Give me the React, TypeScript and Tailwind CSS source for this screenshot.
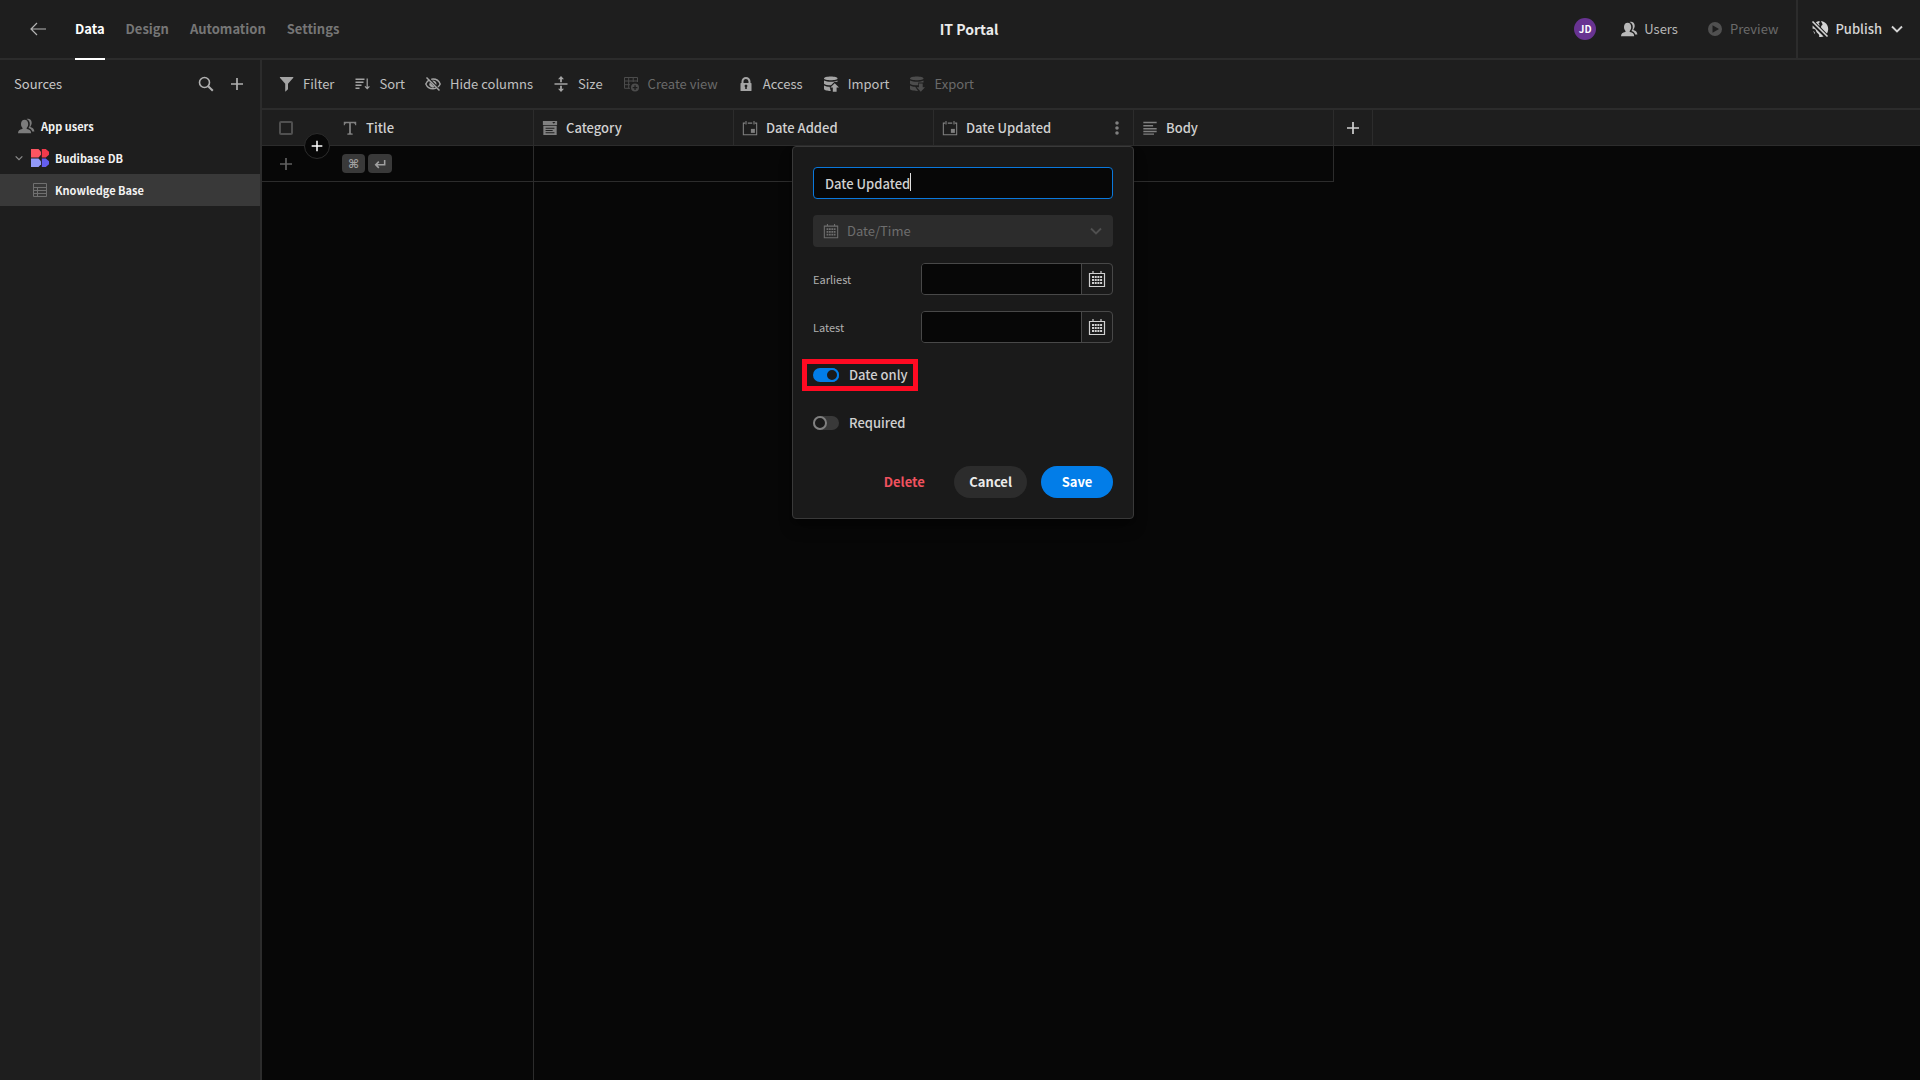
import type { ReactNode } from 'react';

interface IconProps {
  className?: string;
}

interface Column {
  name: string;
  icon: ReactNode;
  active?: boolean;
}

interface Action {
  label: string;
  icon: ReactNode;
  disabled?: boolean;
}

function Svg({ className = 'size-[18px]', children }: IconProps & { children: ReactNode }) {
  return (
    <svg viewBox="0 0 18 18" fill="currentColor" className={`shrink-0 ${className}`} aria-hidden="true">
      {children}
    </svg>
  );
}

const BackIcon = () => (
  <Svg>
    <path d="M17 9H2M8 3 2 9l6 6" fill="none" stroke="currentColor" strokeWidth="1.2" />
  </Svg>
);

const SearchIcon = () => (
  <Svg>
    <circle cx="7.5" cy="7.5" r="5" fill="none" stroke="currentColor" strokeWidth="1.6" />
    <path d="m11.2 11.2 4.6 4.6" stroke="currentColor" strokeWidth="2" />
  </Svg>
);

const PlusIcon = ({ className }: IconProps) => (
  <Svg className={className}>
    <path d="M3 9h12M9 3v12" stroke="currentColor" strokeWidth="1.7" />
  </Svg>
);

const UsersIcon = ({ className }: IconProps) => (
  <Svg className={className}>
    <path d="M1 16.2c0-2.6 1.7-3.4 4.2-4.1.4-.1.5-.5.3-1-1-1.2-1.5-2.4-1.5-4C4 4.3 5.500 2.800 7.600 2.800s3.600 1.500 3.600 4.300c0 1.600-.5 2.800-1.500 4-.2.500-.1.900.3 1 2.500.700 4.200 1.500 4.200 4.100z" />
    <path d="M9.500 2.100c2.500-.9 5.200.5 5.200 3.700 0 1.400-.4 2.400-1.200 3.400-.2.400-.1.800.3 1 2 .7 3.200 1.500 3.600 4.300h-2.200c-.5-1.700-1.700-2.700-3.800-3.400.9-1.200 1.400-2.500 1.400-4.100 0-2.200-1.100-4.100-3.300-4.900z" />
  </Svg>
);

const PreviewIcon = () => (
  <Svg>
    <path fillRule="evenodd" d="M9 2a7 7 0 1 0 0 14A7 7 0 0 0 9 2zM6.500 5.200v7.600L13 9z" />
  </Svg>
);

const PublishIcon = () => (
  <Svg>
    <path d="M1.600 5.600 12.600 16.600A8 8 0 0 1 8 16.800c.6-1.200.2-2.300-.8-3.100-1.300-1-2-2-2.400-3.500C4.300 9 2.700 8.500 1.600 8.800z" />
    <path d="M2.200 11c1.300.6 1.800 1.700 1.900 3.300A8 8 0 0 1 2.200 11z" />
    <path d="M4.800 2.300A8 8 0 0 1 8.300 1c.7.800.3 1.800-.6 2.300-.2.800.1 1.200.8 1.300L8.300 6zM10 1.100a8 8 0 0 1 5.900 12.300L10.300 7.800c-.5-1.200-.2-2.200.8-2.600C12.300 4.700 10.600 3 10 1.100z" />
    <path d="m1.500 1.500 15 15" stroke="currentColor" strokeWidth="1.600" />
  </Svg>
);

const ChevronIcon = ({ className }: IconProps) => (
  <Svg className={className}>
    <path d="m4 6.500 5 5 5-5" fill="none" stroke="currentColor" strokeWidth="1.900" />
  </Svg>
);

const FilterIcon = () => (
  <Svg>
    <path d="M2.900 2h13.400v.8L11 8.800v5.400l-2.800 2.500V8.800L2.900 2.800z" />
  </Svg>
);

const SortIcon = () => (
  <Svg>
    <path d="M2.500 3.500h9v1.600h-9zM2.500 6.500h8v1.600h-8zM2.500 9.500h6v1.600h-6zM2.500 12.500h4v1.600h-4z" />
    <path d="M14.200 3.500v10M12 11.400l2.200 2.300 2.200-2.300" fill="none" stroke="currentColor" strokeWidth="1.200" />
  </Svg>
);

const HideIcon = () => (
  <Svg>
    <path
      d="M5.300 4.900C3.500 6 2.200 7.800 1.800 9c1 2.300 3.800 4.800 7.200 4.800 1.100 0 2.200-.3 3.100-.700M7.200 4.300C7.800 4.100 8.400 4 9 4c3.400 0 6.200 2.500 7.200 5-.400 1-1.200 2.100-2.300 3"
      fill="none"
      stroke="currentColor"
      strokeWidth="1.400"
    />
    <path d="M5.800 7.200a3.600 3.600 0 0 0 4.900 4.900zM8 5.600a3.600 3.600 0 0 1 4.400 4.400z" />
    <path d="m2.500 2.500 13 13" stroke="currentColor" strokeWidth="1.500" />
  </Svg>
);

const SizeIcon = () => (
  <Svg>
    <path d="M2.500 8.200h13v1.600h-13zM9 1l3 3.300H9.900v3H8.100v-3H6zM9 17l3-3.300H9.900v-3H8.100v3H6z" />
  </Svg>
);

const CreateViewIcon = () => (
  <Svg>
    <path d="M15.500 7V2.500h-13v10.800H8M2.500 6h13M2.500 9.700H8M6.700 2.500v10.800M11.200 2.500V7" fill="none" stroke="currentColor" />
    <path fillRule="evenodd" d="M13 8.600a4 4 0 1 0 0 8 4 4 0 0 0 0-8zM12.400 10.300h1.300v1.700h1.700v1.300h-1.700V15h-1.300v-1.700h-1.700V12h1.700z" />
  </Svg>
);

const LockIcon = () => (
  <Svg>
    <path
      fillRule="evenodd"
      d="M14 8h-.5V6.500a4.500 4.500 0 0 0-9 0V8H4a.5.5 0 0 0-.5.500v7a.5.5 0 0 0 .5.500h10a.5.5 0 0 0 .5-.500v-7A.5.5 0 0 0 14 8zM6.500 6.500a2.500 2.500 0 0 1 5 0V8h-5zM9.800 12.200V14H8.200v-1.800a1.400 1.400 0 1 1 1.600 0z"
    />
  </Svg>
);

const ImportIcon = () => (
  <Svg>
    <path d="M2 3.600C2 2.300 5 1.600 8.800 1.600s6.700.7 6.700 2-3 1.700-6.700 1.700S2 4.900 2 3.600z" />
    <path d="M2 5.500c1.800.9 4.300 1.200 7 1.200 2.600 0 5-.3 6.500-1.200v1.300L12.300 7 9 10.300C6 10.300 3 9.800 2 8.800zM2 10.500c1.600.9 3.400 1.200 5.600 1.300L8.800 16C5 16 2 15.300 2 13.800z" />
    <path d="m12.700 8.200 4.300 4.400h-2.400v4.200h-3.800v-4.200H8.400z" />
  </Svg>
);

const ExportIcon = () => (
  <Svg>
    <path d="M2 3.600C2 2.300 5 1.600 8.800 1.600s6.700.7 6.700 2-3 1.700-6.700 1.700S2 4.900 2 3.600z" />
    <path d="M2 5.500c1.800.9 4.300 1.200 7 1.200 2.600 0 5-.3 6.500-1.200v2h-5.300v2.800C6 10.300 3 9.800 2 8.800zM2 10.500c1.600.9 3.400 1.200 5.200 1.300L10 15.900C5 16 2 15.300 2 13.800z" />
    <path d="m12.800 16.800 4.200-4.500h-2.300V8.500h-3.800v3.800H8.600z" />
  </Svg>
);

const TextIcon = () => (
  <Svg className="size-4">
    <path d="M2 2h14v4h-1.200c-.2-1.700-.8-2.300-2.400-2.300H10v10.500c0 .8.500 1 2 1.100V16.500H6v-1.200c1.500-.1 2-.3 2-1.100V3.700H5.600C4 3.700 3.400 4.300 3.200 6H2z" />
  </Svg>
);

const OptionsIcon = () => (
  <Svg className="size-4">
    <path fillRule="evenodd" d="M1 1h16v4.500H1zM11.500 2.300l1.800 2 1.800-2zM1.500 6.500h15V17h-15zM4 8.700v1.200h10V8.700zM4 11.200v1.200h8v-1.200zM4 13.700v1.200h10v-1.200z" />
  </Svg>
);

const DateIcon = () => (
  <Svg className="size-4">
    <path d="M3.500 3.500h-2v13h15v-13h-2M6.500 3.500h5M4.500 1v4M13.500 1v4" fill="none" stroke="currentColor" strokeWidth="1.200" />
    <path d="M10 10h4.500v4.500H10z" />
  </Svg>
);

const LongformIcon = () => (
  <Svg className="size-4">
    <path d="M1.500 2h15v1.700h-15zM1.500 5.500h11v1.700h-11zM1.500 9h15v1.700h-15zM1.500 12.200h15v1.700h-15zM1.500 15.200h12v1.500h-12z" />
  </Svg>
);

const MoreIcon = () => (
  <Svg className="size-4">
    <circle cx="9" cy="3.400" r="2" />
    <circle cx="9" cy="9" r="2" />
    <circle cx="9" cy="14.600" r="2" />
  </Svg>
);

const CalendarIcon = ({ className }: IconProps) => (
  <Svg className={className}>
    <path d="M1.500 3.500h15v13h-15zM5 1v3M13 1v3" fill="none" stroke="currentColor" strokeWidth="1.200" />
    <path d="M4 6h2v2H4zM6.700 6h2v2h-2zM9.400 6h2v2h-2zM12.100 6h2v2h-2zM4 9h2v2H4zM6.700 9h2v2h-2zM9.400 9h2v2h-2zM12.100 9h2v2h-2zM4 12h2v2H4zM6.700 12h2v2h-2zM9.400 12h2v2h-2zM12.100 12h2v2h-2z" />
  </Svg>
);

const TableIcon = () => (
  <Svg>
    <path d="M2.500 2.500h13v13h-13zM2.500 6.500h13M2.500 9.500h13M2.500 12.500h13M6.500 6.500v9" fill="none" stroke="currentColor" />
  </Svg>
);

const BudibaseLogo = () => (
  <Svg>
    <path d="M0 0h7.500L10 2.700v3L7.500 8.400H0z" fill="#fb5561" />
    <path d="M10.800 0h4L18 2.700v3l-3.200 2.700h-4z" fill="#f13a4c" />
    <path d="M0 9.600h7.500l2.500 2.700v3L7.500 18H0z" fill="#9299f8" />
    <path d="M10.800 9.600h4l3.200 2.700v3L14.800 18h-4z" fill="#645ef0" />
  </Svg>
);

const ReturnIcon = () => (
  <Svg className="size-[14px]">
    <path d="M15 4v6H4M7.500 6 3.500 10l4 4" fill="none" stroke="currentColor" strokeWidth="2" />
  </Svg>
);

const tabs = ['Data', 'Design', 'Automation', 'Settings'];

const actions: Action[] = [
  { label: 'Filter', icon: <FilterIcon /> },
  { label: 'Sort', icon: <SortIcon /> },
  { label: 'Hide columns', icon: <HideIcon /> },
  { label: 'Size', icon: <SizeIcon /> },
  { label: 'Create view', icon: <CreateViewIcon />, disabled: true },
  { label: 'Access', icon: <LockIcon /> },
  { label: 'Import', icon: <ImportIcon /> },
  { label: 'Export', icon: <ExportIcon />, disabled: true },
];

const columns: Column[] = [
  { name: 'Category', icon: <OptionsIcon /> },
  { name: 'Date Added', icon: <DateIcon /> },
  { name: 'Date Updated', icon: <DateIcon />, active: true },
  { name: 'Body', icon: <LongformIcon /> },
];

function TopBar() {
  return (
    <header className="grid h-[60px] shrink-0 grid-cols-[1fr_auto_1fr] border-b-2 border-[#2c2c2c] pl-[18px]">
      <div className="flex items-center gap-7 pl-[11px]">
        <button aria-label="Back" className="text-[#b4b4b4]">
          <BackIcon />
        </button>
        <nav className="-mb-[2px] flex gap-[21px] self-stretch font-bold">
          {tabs.map((tab) => (
            <a
              key={tab}
              href="#"
              className={`flex items-center border-b-2 ${
                tab === 'Data' ? 'border-white text-white' : 'border-transparent text-[#767676]'
              }`}
            >
              {tab}
            </a>
          ))}
        </nav>
      </div>
      <h1 className="flex items-center text-[14px] font-bold text-[#ebebeb]">IT Portal</h1>
      <div className="flex items-center justify-end">
        <span className="flex size-[22px] items-center justify-center rounded-full bg-[#683391] text-[10px] font-bold text-white">
          JD
        </span>
        <button className="ml-6 flex items-center gap-[6px] text-[#b8b8b8]">
          <UsersIcon />
          Users
        </button>
        <button disabled className="ml-7 flex items-center gap-[6px] text-[#6a6a6a]">
          <span className="text-[#505050]">
            <PreviewIcon />
          </span>
          Preview
        </button>
        <button className="ml-[18px] flex items-center gap-[6px] self-stretch border-l-2 border-[#2c2c2c] pr-[14px] pl-[13px] font-medium text-[#d4d4d4]">
          <PublishIcon />
          Publish
          <ChevronIcon />
        </button>
      </div>
    </header>
  );
}

function Sidebar() {
  return (
    <aside className="w-[262px] shrink-0 border-r-2 border-[#2c2c2c]">
      <div className="flex h-12 items-center px-[14px]">
        <h2 className="grow text-[#c8c8c8]">Sources</h2>
        <div className="flex gap-[13px] text-[#b0b0b0]">
          <button aria-label="Search">
            <SearchIcon />
          </button>
          <button aria-label="Add source">
            <PlusIcon />
          </button>
        </div>
      </div>
      <ul className="mt-[2px] text-[11px] font-bold text-[#f2f2f2]">
        <li className="flex h-8 items-center gap-[6px] pl-[17px]">
          <span className="text-[#7c7c7c]">
            <UsersIcon />
          </span>
          App users
        </li>
        <li className="flex h-8 items-center gap-[6px] pl-[13px]">
          <span className="text-[#8a8a8a]">
            <ChevronIcon className="size-3" />
          </span>
          <BudibaseLogo />
          Budibase DB
        </li>
        <li className="flex h-8 items-center gap-[6px] bg-[#393939] pl-[31px]">
          <span className="text-[#707070]">
            <TableIcon />
          </span>
          Knowledge Base
        </li>
      </ul>
    </aside>
  );
}

function Toolbar() {
  return (
    <div className="flex h-[50px] shrink-0 items-center gap-[19px] border-b-2 border-[#2c2c2c] bg-[#1e1e1e] pl-[15px]">
      {actions.map((action) => (
        <button
          key={action.label}
          disabled={action.disabled}
          className={`flex items-center gap-2 ${action.disabled ? 'text-[#6a6a6a]' : 'text-[#c0c0c0]'}`}
        >
          <span className={action.disabled ? 'text-[#4c4c4c]' : 'text-[#a4a4a4]'}>{action.icon}</span>
          {action.label}
        </button>
      ))}
    </div>
  );
}

function DateField({ id, label }: { id: string; label: string }) {
  return (
    <div className="flex h-8 items-center">
      <label htmlFor={id} className="w-[108px] text-[11px] text-[#b0b0b0]">
        {label}
      </label>
      <div className="flex h-8 grow overflow-hidden rounded border border-[#484848]">
        <input id={id} type="text" className="w-0 grow bg-[#070707] px-3 outline-none" />
        <button
          type="button"
          aria-label={`Pick ${label.toLowerCase()} date`}
          className="flex w-[31px] items-center justify-center border-l border-[#484848] text-[#d0d0d0]"
        >
          <CalendarIcon />
        </button>
      </div>
    </div>
  );
}

function Toggle({ label, checked }: { label: string; checked?: boolean }) {
  return (
    <label className="relative flex h-8 items-center gap-[10px] self-start font-medium text-[#d0d0d0]">
      <input type="checkbox" role="switch" defaultChecked={checked} className="peer sr-only" />
      <span className="flex h-[14px] w-[26px] rounded-full bg-[#393939] text-[#808080] peer-checked:justify-end peer-checked:bg-[#027de8] peer-checked:text-[#027de8]">
        <span className="size-[14px] rounded-full border-2 border-current bg-[#1a1a1a]" />
      </span>
      {label}
      {checked && <span className="absolute inset-y-0 -right-[10px] -left-[11px] border-[5px] border-[#ff0a22]" />}
    </label>
  );
}

function ColumnEditor() {
  return (
    <form className="absolute top-9 -right-px z-10 flex w-[342px] flex-col gap-4 rounded border border-[#393939] bg-[#1a1a1a] p-5 font-normal shadow-lg shadow-black/40">
      <div className="relative">
        <input
          type="text"
          aria-label="Column name"
          defaultValue="Date Updated"
          className="block h-8 w-full rounded border border-[#0a78dc] bg-[#070707] px-[11px] font-medium text-[#d0d0d0] caret-transparent outline-none"
        />
        <span className="absolute top-[6px] left-[97px] h-[18px] w-px bg-[#e0e0e0]" />
      </div>
      <div className="relative flex items-center text-[#6e6e6e]">
        <select
          aria-label="Column type"
          disabled
          className="h-8 w-full appearance-none rounded bg-[#2c2c2c] pl-[34px] text-[#6e6e6e] opacity-100"
        >
          <option>Date/Time</option>
        </select>
        <span className="absolute left-[10px]">
          <CalendarIcon className="size-4" />
        </span>
        <span className="absolute right-2 text-[#505050]">
          <ChevronIcon />
        </span>
      </div>
      <DateField id="earliest" label="Earliest" />
      <DateField id="latest" label="Latest" />
      <Toggle label="Date only" checked />
      <Toggle label="Required" />
      <div className="mt-[11px] flex justify-end gap-[14px] font-bold">
        <button type="button" className="h-8 min-w-[72px] rounded-full px-[15px] text-[#f0525f]">
          Delete
        </button>
        <button type="button" className="h-8 min-w-[72px] rounded-full bg-[#2c2c2c] px-[15px] text-[#ebebeb]">
          Cancel
        </button>
        <button type="button" className="h-8 min-w-[72px] rounded-full bg-[#027de8] px-[15px] text-white">
          Save
        </button>
      </div>
    </form>
  );
}

function Grid() {
  return (
    <table className="h-full w-full table-fixed border-separate border-spacing-0 text-left">
      <colgroup>
        <col className="w-[72px]" />
        <col className="w-[200px]" />
        <col className="w-[200px]" />
        <col className="w-[200px]" />
        <col className="w-[200px]" />
        <col className="w-[200px]" />
        <col className="w-[39px]" />
        <col />
      </colgroup>
      <thead className="bg-[#1e1e1e] font-medium text-[#d0d0d0]">
        <tr className="h-9">
          <th className="relative border-b border-[#2c2c2c] p-0 pl-[17px]">
            <input
              type="checkbox"
              aria-label="Select all rows"
              className="block size-[14px] appearance-none rounded-[2px] border-2 border-[#505050]"
            />
            <button
              aria-label="Add row"
              className="absolute right-1 -bottom-[14px] flex size-[26px] items-center justify-center rounded-full border border-[#2c2c2c] bg-[#070707] text-white"
            >
              <PlusIcon className="size-4" />
            </button>
          </th>
          <th className="border-r border-b border-[#2c2c2c] p-0 font-medium">
            <div className="flex items-center gap-2 pl-2">
              <span className="text-[#808080]">
                <TextIcon />
              </span>
              Title
            </div>
          </th>
          {columns.map((column) => (
            <th key={column.name} className="relative border-r border-b border-[#2c2c2c] p-0 font-medium">
              <div className="flex items-center gap-2 px-2">
                <span className="text-[#808080]">{column.icon}</span>
                <span className="grow">{column.name}</span>
                {column.active && (
                  <button aria-label="Column options" className="text-[#808080]">
                    <MoreIcon />
                  </button>
                )}
              </div>
              {column.active && <ColumnEditor />}
            </th>
          ))}
          <th className="border-r border-b border-[#2c2c2c] p-0">
            <button aria-label="Add column" className="mx-auto block">
              <PlusIcon />
            </button>
          </th>
          <th className="border-b border-[#2c2c2c] p-0" />
        </tr>
      </thead>
      <tbody>
        <tr className="h-9">
          <td className="border-b border-[#2c2c2c] p-0 pl-[15px] text-[#606060]">
            <button aria-label="New row" className="block">
              <PlusIcon />
            </button>
          </td>
          <td className="border-r border-b border-[#2c2c2c] p-0 pl-2">
            <div className="flex gap-[3px] text-[12px] text-[#a0a0a0]">
              <kbd className="flex h-[19px] w-[23px] items-center justify-center rounded bg-[#393939] font-['DejaVu_Sans',sans-serif] font-bold">
                ⌘
              </kbd>
              <kbd className="flex h-[19px] w-6 items-center justify-center rounded bg-[#393939]">
                <ReturnIcon />
              </kbd>
            </div>
          </td>
          <td className="border-b border-[#2c2c2c]" />
          <td className="border-b border-[#2c2c2c]" />
          <td className="border-b border-[#2c2c2c]" />
          <td className="border-r border-b border-[#2c2c2c]" />
          <td />
          <td />
        </tr>
        <tr>
          <td />
          <td className="border-r border-[#2c2c2c]" />
          <td colSpan={6} />
        </tr>
      </tbody>
    </table>
  );
}

export default function App() {
  return (
    <div className="flex h-screen flex-col bg-[#1e1e1e] font-['Noto_Sans_CJK_SC','Open_Sans',sans-serif] text-[13px] leading-5 text-[#c8c8c8]">
      <TopBar />
      <div className="flex min-h-0 grow">
        <Sidebar />
        <main className="flex min-w-0 grow flex-col bg-[#070707]">
          <Toolbar />
          <div className="min-h-0 grow">
            <Grid />
          </div>
        </main>
      </div>
    </div>
  );
}
